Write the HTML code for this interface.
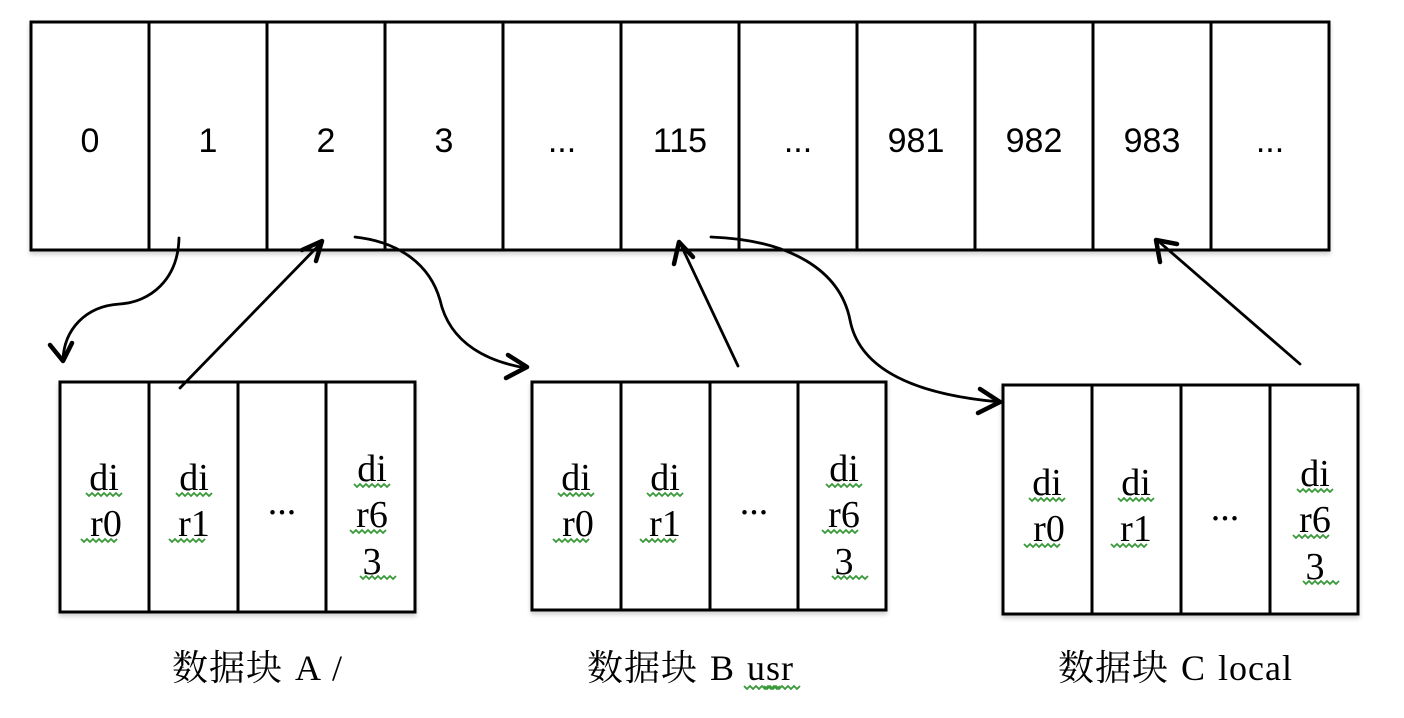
<!DOCTYPE html>
<html><head><meta charset="utf-8"><style>
html,body{margin:0;padding:0;background:#fff;width:1404px;height:718px;overflow:hidden}
svg{display:block}
.n{font-family:"Liberation Sans","DejaVu Sans",sans-serif;font-size:34px;fill:#000;text-anchor:middle}
.s{font-family:"Liberation Serif","Noto Serif CJK SC",serif;font-size:38px;fill:#000;text-anchor:middle}
.c{font-family:"Liberation Serif","Noto Serif CJK SC",serif;font-size:36px;fill:#000;letter-spacing:1px;word-spacing:2px}
</style></head><body>
<svg width="1404" height="718" viewBox="0 0 1404 718" xmlns="http://www.w3.org/2000/svg">
<defs>
<filter id="sh" x="-5%" y="-5%" width="110%" height="115%"><feDropShadow dx="0" dy="3" stdDeviation="2" flood-color="#000" flood-opacity="0.18"/></filter>
<g id="wv"><path d="M0,0 l3,3 l3,-3 l3,3 l3,-3 l3,3 l3,-3 l3,3 l3,-3 l3,3 l3,-3 l3,3 l3,-3" fill="none" stroke="#3a9a3a" stroke-width="1.8"/></g>
</defs>
<g fill="none" stroke="#000" stroke-width="3" filter="url(#sh)">
<rect x="31" y="22" width="1298" height="228" fill="#fff"/>
<path d="M149,22V250M267,22V250M385,22V250M503,22V250M621,22V250M739,22V250M857,22V250M975,22V250M1093,22V250M1211,22V250"/>
<rect x="60" y="382" width="355" height="230" fill="#fff"/>
<path d="M149,382V612M238,382V612M326,382V612"/>
<rect x="532" y="382" width="354" height="228" fill="#fff"/>
<path d="M621,382V610M710,382V610M798,382V610"/>
<rect x="1003" y="385" width="355" height="229" fill="#fff"/>
<path d="M1092,385V614M1181,385V614M1270,385V614"/>
</g>
<g class="n">
<text x="90" y="152">0</text><text x="208" y="152">1</text><text x="326" y="152">2</text><text x="444" y="152">3</text>
<text x="562" y="152">...</text><text x="680" y="152">115</text><text x="798" y="152">...</text>
<text x="916" y="152">981</text><text x="1034" y="152">982</text><text x="1152" y="152">983</text><text x="1270" y="152">...</text>
</g>
<g class="s">
<text x="104" y="490">di</text><text x="106" y="536">r0</text>
<text x="194" y="490">di</text><text x="194" y="536">r1</text>
<text x="282" y="514">...</text>
<text x="372" y="481">di</text><text x="372" y="527">r6</text><text x="372" y="574">3</text>
<text x="576" y="490">di</text><text x="578" y="536">r0</text>
<text x="665" y="490">di</text><text x="665" y="536">r1</text>
<text x="754" y="514">...</text>
<text x="844" y="481">di</text><text x="844" y="527">r6</text><text x="844" y="574">3</text>
<text x="1047" y="495">di</text><text x="1049" y="541">r0</text>
<text x="1136" y="495">di</text><text x="1136" y="541">r1</text>
<text x="1225" y="520">...</text>
<text x="1315" y="486">di</text><text x="1315" y="532">r6</text><text x="1315" y="579">3</text>
</g>
<g>
<use href="#wv" x="86" y="493"/><use href="#wv" x="81" y="539"/>
<use href="#wv" x="176" y="493"/><use href="#wv" x="169" y="539"/>
<use href="#wv" x="354" y="484"/><use href="#wv" x="350" y="530"/><use href="#wv" x="360" y="576"/>
<use href="#wv" x="558" y="493"/><use href="#wv" x="553" y="539"/>
<use href="#wv" x="647" y="493"/><use href="#wv" x="640" y="539"/>
<use href="#wv" x="826" y="484"/><use href="#wv" x="822" y="530"/><use href="#wv" x="832" y="576"/>
<use href="#wv" x="1029" y="498"/><use href="#wv" x="1024" y="544"/>
<use href="#wv" x="1118" y="498"/><use href="#wv" x="1111" y="544"/>
<use href="#wv" x="1297" y="489"/><use href="#wv" x="1293" y="535"/><use href="#wv" x="1303" y="581"/>
<use href="#wv" x="744" y="686"/><use href="#wv" x="764" y="686"/>
</g>
<text class="c" x="172" y="680">数据块 A /</text>
<text class="c" x="587" y="680">数据块 B usr</text>
<text class="c" x="1058" y="680">数据块 C local</text>
<g fill="none" stroke="#000" stroke-width="2.8" stroke-linecap="round" stroke-linejoin="round">
<path d="M179,238 C178,280 150,302 120,304 C85,306 64,330 63,360"/>
<path d="M50,345 L63,361 L72,343" stroke-width="4.5"/>
<path d="M180,388 L322,242"/>
<path d="M302,250 L322,241 L316,261" stroke-width="4.5"/>
<path d="M355,237 C400,242 430,265 440,300 C450,345 490,362 526,368"/>
<path d="M508,355 L527,367 L506,378" stroke-width="4.5"/>
<path d="M738,366 L680,243"/>
<path d="M674,264 L679,242 L693,257" stroke-width="4.5"/>
<path d="M711,237 C790,240 840,270 850,320 C860,372 920,395 1000,402"/>
<path d="M980,389 L1000,402 L978,413" stroke-width="4.5"/>
<path d="M1300,364 L1157,240"/>
<path d="M1160,262 L1156,240 L1177,244" stroke-width="4.5"/>
</g>
</svg>
</body></html>
